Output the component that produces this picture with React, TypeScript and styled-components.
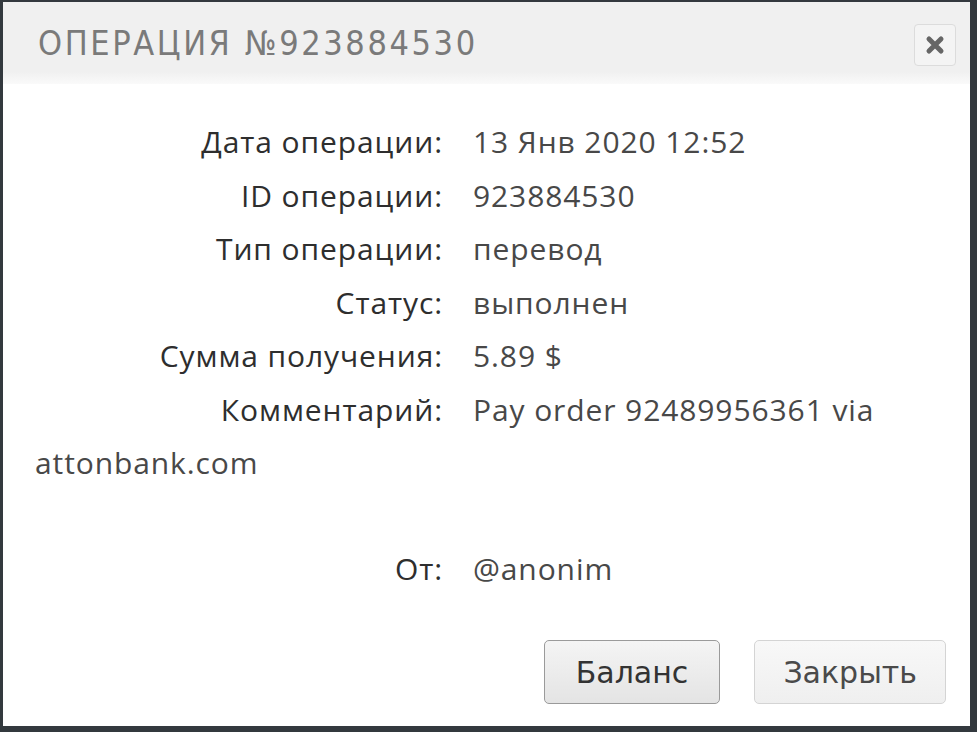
import React from 'react';
import styled, { createGlobalStyle } from 'styled-components';

const GlobalStyle = createGlobalStyle`
    html, body {
        margin: 0;
        padding: 0;
        background: #33393e;
    }
`;

const Backdrop = styled.div`
    width: 977px;
    height: 732px;
    padding: 2px 7px 6px 3px;
    box-sizing: border-box;
    background: #33393e;
`;

const Dialog = styled.div`
    width: 100%;
    height: 100%;
    background: #ffffff;
    display: flex;
    flex-direction: column;
`;

const Header = styled.div`
    height: 82px;
    box-sizing: border-box;
    padding: 0 14px 0 35px;
    display: flex;
    align-items: center;
    justify-content: space-between;
    background: linear-gradient(180deg, #f0f0f0 0%, #f0f0f0 85%, #fafafa 100%);
`;

const Title = styled.h1`
    margin: 0;
    font-family: 'DejaVu Sans Condensed', 'DejaVu Sans', sans-serif;
    font-stretch: condensed;
    font-weight: normal;
    font-size: 34px;
    letter-spacing: 2.6px;
    color: #7a7a7a;
`;

const CloseButton = styled.button`
    width: 42px;
    height: 42px;
    margin-top: 3px;
    border: 1px solid #dcdcdc;
    border-radius: 4px;
    background: #f4f4f4;
    display: flex;
    align-items: center;
    justify-content: center;
    padding: 0;
    cursor: pointer;
`;

const Body = styled.div`
    flex: 1;
    padding: 31px 20px 0 32px;
    font-family: 'Open Sans', sans-serif;
    font-size: 30px;
    letter-spacing: 0.9px;
    line-height: 53.5px;
`;

const Row = styled.div<{ $gapTop?: number }>`
    margin-top: ${props => props.$gapTop || 0}px;
    color: #484848;
`;

const Label = styled.span`
    display: inline-block;
    width: 408px;
    text-align: right;
    margin-right: 30px;
    color: #2e2e2e;
`;

const Footer = styled.div`
    display: flex;
    justify-content: flex-end;
    gap: 34px;
    padding: 0 24px 22px 0;
`;

const Button = styled.button<{ $primary?: boolean }>`
    height: 64px;
    padding: 0 ${props => props.$primary ? 31 : 28}px;
    font-family: 'DejaVu Sans', sans-serif;
    font-size: 30px;
    color: ${props => props.$primary ? '#333333' : '#4a4a4a'};
    border: 1px solid ${props => props.$primary ? '#9a9a9a' : '#d4d4d4'};
    border-radius: 5px;
    background: ${props => props.$primary
        ? 'linear-gradient(180deg, #f4f4f4 0%, #e4e4e4 100%)'
        : 'linear-gradient(180deg, #f8f8f8 0%, #efefef 100%)'};
    cursor: pointer;
`;

const rows = [
    { label: 'Дата операции:', value: '13 Янв 2020 12:52' },
    { label: 'ID операции:', value: '923884530' },
    { label: 'Тип операции:', value: 'перевод' },
    { label: 'Статус:', value: 'выполнен' },
    { label: 'Сумма получения:', value: '5.89 $' },
    { label: 'Комментарий:', value: 'Pay order 92489956361 via attonbank.com' },
];

export default function App() {
    return (
        <Backdrop>
            <GlobalStyle />
            <Dialog>
                <Header>
                    <Title>ОПЕРАЦИЯ №923884530</Title>
                    <CloseButton aria-label="close">
                        <svg width="20" height="20" viewBox="0 0 20 20">
                            <path d="M4 4 L16 16 M16 4 L4 16" stroke="#666" strokeWidth="5" strokeLinecap="round" />
                        </svg>
                    </CloseButton>
                </Header>
                <Body>
                    {rows.map(r => (
                        <Row key={r.label}>
                            <Label>{r.label}</Label>{r.value}
                        </Row>
                    ))}
                    <Row $gapTop={52}>
                        <Label>От:</Label>@anonim
                    </Row>
                </Body>
                <Footer>
                    <Button $primary>Баланс</Button>
                    <Button>Закрыть</Button>
                </Footer>
            </Dialog>
        </Backdrop>
    );
}
